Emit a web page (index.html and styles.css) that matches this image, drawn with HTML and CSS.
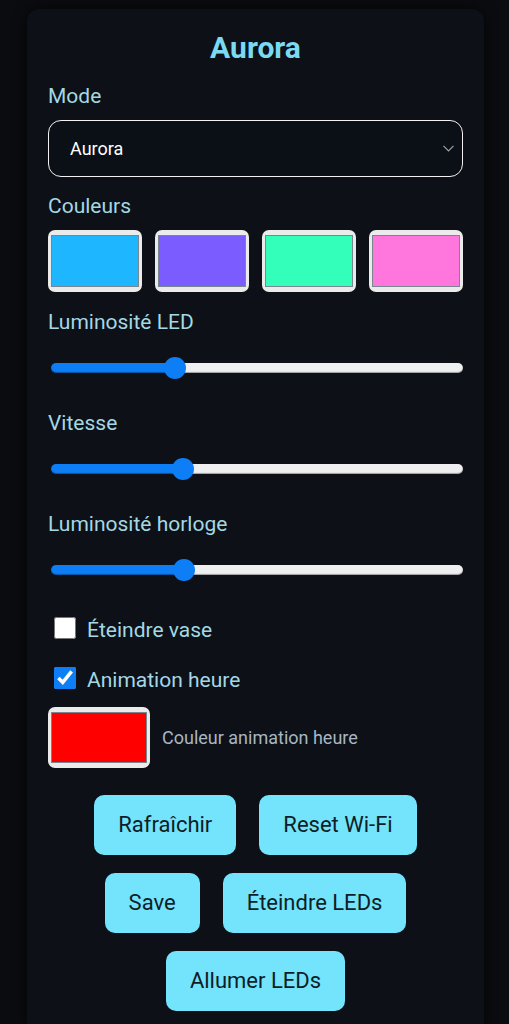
FILE: index.html
```html
<!DOCTYPE html>
<html lang="fr">
<head>
  <meta charset="UTF-8" />
  <meta name="viewport" content="width=device-width, initial-scale=1.0" />
  <title>Aurora</title>
  <link rel="stylesheet" href="styles.css">
</head>
<body>
  <div class="card">
    <h1>Aurora</h1>

    <label class="label" for="mode">Mode</label>
    <div class="select-wrap">
      <select id="mode">
        <option>Aurora</option>
        <option>Arc-en-ciel</option>
        <option>Fixe</option>
      </select>
      <svg class="chevron" width="11" height="7" viewBox="0 0 11 7">
        <path d="M0.5 0.8 L5.5 5.8 L10.5 0.8" fill="none" stroke="#9aa3ab" stroke-width="1.2"/>
      </svg>
    </div>

    <div class="label">Couleurs</div>
    <div class="swatches">
      <input type="color" class="swatch" value="#1eb6ff">
      <input type="color" class="swatch" value="#7b5cff">
      <input type="color" class="swatch" value="#33ffbb">
      <input type="color" class="swatch" value="#ff77dd">
    </div>

    <label class="label" for="bright">Luminosité LED</label>
    <input type="range" id="bright" class="slider" min="0" max="255" value="74" style="--p: 30.1%">

    <label class="label" for="speed">Vitesse</label>
    <input type="range" id="speed" class="slider" min="0" max="255" value="79" style="--p: 32%">

    <label class="label" for="clock">Luminosité horloge</label>
    <input type="range" id="clock" class="slider" min="0" max="255" value="80" style="--p: 32.3%">

    <label class="check">
      <input type="checkbox">
      <span>Éteindre vase</span>
    </label>
    <label class="check">
      <input type="checkbox" checked>
      <span>Animation heure</span>
    </label>

    <div class="color-row">
      <input type="color" class="swatch big" value="#ff0000">
      <span>Couleur animation heure</span>
    </div>

    <div class="buttons">
      <button>Rafraîchir</button>
      <button>Reset Wi-Fi</button>
      <button>Save</button>
      <button>Éteindre LEDs</button>
      <button>Allumer LEDs</button>
    </div>
  </div>
</body>
</html>
```

FILE: styles.css
```css
body {
  margin: 0;
  font-family: Roboto, 'Noto Sans', sans-serif;
  background-color: #0a0c0f;
  color: #a3d8e4;
}

.card {
  margin: 9px 25px 0 27px;
  padding: 22px 21px 24px;
  background-color: #0d1117;
  border-radius: 12px;
  box-shadow: 0 0 14px rgba(0, 0, 0, 0.7);
}

h1 {
  margin: 0 0 19px;
  text-align: center;
  font-size: 30px;
  line-height: 34px;
  font-weight: bold;
  color: #7bd9f2;
}

.label {
  display: block;
  font-size: 21px;
  line-height: 24px;
  margin-bottom: 12px;
}

.select-wrap {
  position: relative;
  margin-bottom: 17px;
}

select {
  -webkit-appearance: none;
  appearance: none;
  width: 100%;
  height: 57px;
  padding: 0 30px 0 21px;
  background-color: #0b1016;
  color: #fff;
  border: 1.5px solid #f2f2f2;
  border-radius: 13px;
  font-family: Roboto, sans-serif;
  font-size: 18px;
  outline: none;
}

.chevron {
  position: absolute;
  right: 9px;
  top: 25px;
  pointer-events: none;
}

.swatches {
  display: grid;
  grid-template-columns: repeat(4, 1fr);
  gap: 13px;
  margin-bottom: 18px;
}

.swatch {
  -webkit-appearance: none;
  appearance: none;
  width: 100%;
  height: 62px;
  margin: 0;
  padding: 5px 3px;
  background-color: #ebebeb;
  border: none;
  border-radius: 7px;
  cursor: pointer;
}

.swatch::-webkit-color-swatch-wrapper {
  padding: 0;
}

.swatch::-webkit-color-swatch {
  border: 1px solid #7a8790;
  border-radius: 0;
}

.swatch.big {
  width: 102px;
  height: 61px;
  flex-shrink: 0;
}

.slider {
  -webkit-appearance: none;
  appearance: none;
  display: block;
  width: 412px;
  height: 22px;
  margin: 23px 0 32px 3px;
  background: transparent;
}

.slider::-webkit-slider-runnable-track {
  height: 10px;
  border-radius: 5px;
  background: linear-gradient(to right, #0d7ef5 var(--p), #eeeff1 var(--p));
  box-shadow: inset 0 -1px 1px rgba(0, 0, 0, 0.35);
}

.slider::-webkit-slider-thumb {
  -webkit-appearance: none;
  width: 22px;
  height: 22px;
  margin-top: -6px;
  border-radius: 50%;
  background: #0d7ef5;
  border: none;
}

.check {
  display: flex;
  align-items: center;
  height: 30px;
  margin-bottom: 20px;
  font-size: 21px;
}

.check input {
  width: 22px;
  height: 22px;
  margin: 0 11px 0 6px;
  accent-color: #0d7ef5;
}

.check span {
  padding-top: 4px;
}

.color-row {
  display: flex;
  align-items: center;
  gap: 12px;
  margin: -6px 0 27px;
  font-size: 18px;
  color: #a8b6c3;
}

.buttons {
  display: flex;
  flex-wrap: wrap;
  justify-content: center;
  gap: 18px 23px;
}

button {
  padding: 17px 24px;
  font-family: Roboto, sans-serif;
  font-size: 22px;
  line-height: 26px;
  color: #0f1d26;
  background-color: #73e4fb;
  border: none;
  border-radius: 10px;
  cursor: pointer;
}
```
